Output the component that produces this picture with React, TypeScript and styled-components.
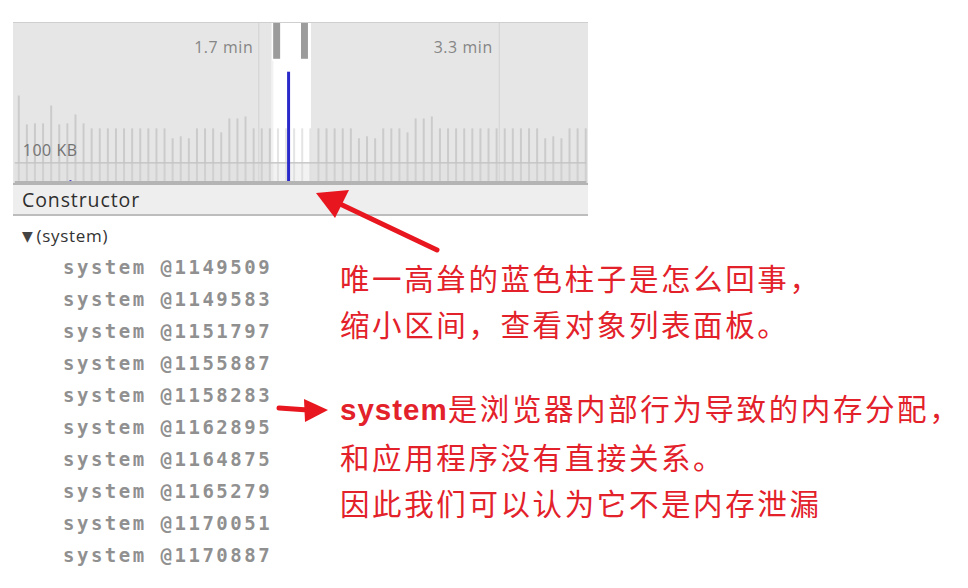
import React from "react";
import styled, { createGlobalStyle } from "styled-components";

const Global = createGlobalStyle`
  html, body { margin: 0; padding: 0; background: #ffffff; }
  body { width: 968px; height: 588px; overflow: hidden; }
`;

const Page = styled.div`
  position: relative;
  width: 968px;
  height: 588px;
  padding: 22px 0 0 13px;
  box-sizing: border-box;
  font-family: "Open Sans", "DejaVu Sans", sans-serif;
`;

const Panel = styled.div`
  width: 575px;
  display: flex;
  flex-direction: column;
`;

const Chart = styled.svg`
  display: block;
  width: 575px;
  height: 161px;
  background: #e6e6e6;
  border-top: 1px solid #cfcfcf;
  box-sizing: border-box;
`;

const Header = styled.div`
  height: 33px;
  display: flex;
  align-items: center;
  padding-left: 9px;
  background: #eeeeee;
  border-top: 2px solid #b4b4b4;
  border-bottom: 2px solid #bdbdbd;
  box-sizing: border-box;
  font-size: 19.5px;
  letter-spacing: 0.9px;
  color: #2e2e2e;
`;

const Lower = styled.div`
  display: flex;
  flex-direction: row;
`;

const List = styled.div`
  width: 327px;
  padding-top: 3px;
  display: flex;
  flex-direction: column;
`;

const GroupRow = styled.div`
  height: 32px;
  display: flex;
  align-items: center;
  padding-left: 9px;
  font-size: 17px;
  letter-spacing: 0.7px;
  color: #333333;
  gap: 3px;
`;

const Tri = styled.span`
  font-size: 14px;
  color: #444;
`;

const Item = styled.div`
  height: 32px;
  display: flex;
  align-items: center;
  padding-left: 50px;
  font-family: "DejaVu Sans Mono", "Liberation Mono", monospace;
  font-size: 19px;
  font-weight: bold;
  letter-spacing: 2.5px;
  color: #909090;
  white-space: nowrap;
`;

const Notes = styled.div`
  padding-top: 38px;
  display: flex;
  flex-direction: column;
  gap: 38px;
`;

const Note = styled.div`
  font-family: "Noto Sans CJK SC", "Noto Sans", sans-serif;
  font-size: 29.5px;
  line-height: 46px;
  letter-spacing: 2.6px;
  color: #e3212a;
  white-space: nowrap;
`;

const Strong = styled.b`
  font-family: "Liberation Sans", "Noto Sans CJK SC", sans-serif;
  font-weight: bold;
  letter-spacing: 1px;
`;

const Overlay = styled.svg`
  position: absolute;
  left: 0;
  top: 0;
  width: 968px;
  height: 588px;
  pointer-events: none;
`;

const ids = [
  "1149509",
  "1149583",
  "1151797",
  "1155887",
  "1158283",
  "1162895",
  "1164875",
  "1165279",
  "1170051",
  "1170887",
];

// top y (page coords) of the grey allocation bars
const firstTops = [95, 124, 123, 123, 105, 124, 123, 114, 123, 128];
const pattern = [128, 128, 136, 128, 128, 118, 128, 128, 128, 138, 128, 128, 116, 128, 132, 128, 128, 128, 138, 128, 128, 118, 128];

function bars() {
  const out: { x: number; top: number }[] = [];
  let i = 0;
  for (let x = 16; x < 588; x += 8.15) {
    const top = i < firstTops.length ? firstTops[i] : pattern[(i * 7) % pattern.length];
    out.push({ x: x - 13, top: top - 22 });
    i++;
  }
  return out;
}

const labelStyle = {
  fontFamily: '"Open Sans", "DejaVu Sans", sans-serif',
  fontSize: 16,
  letterSpacing: 0.6,
};

function TimelineChart() {
  const b = bars();
  return (
    <Chart viewBox="0 0 575 161">
      {/* selection window */}
      <rect x={260} y={0} width={38} height={161} fill="#ffffff" />
      <rect x={258} y={0} width={2} height={161} fill="#f2f2f2" />
      {b.map((bar, i) => {
        const inSel = bar.x > 258 && bar.x < 298;
        return (
          <rect
            key={i}
            x={bar.x}
            y={bar.top}
            width={2}
            height={161 - bar.top}
            fill={inSel ? "#e4e4e4" : "#cbcbcb"}
          />
        );
      })}
      {/* grid lines */}
      <rect x={245} y={0} width={1} height={161} fill="#d2d2d2" />
      <rect x={487} y={0} width={1} height={161} fill="#d2d2d2" />
      <rect x={0} y={140} width={575} height={1.5} fill="#c4c4c4" />
      <rect x={0} y={141.5} width={575} height={19.5} fill="#d9d9d9" opacity={0.35} />
      {/* handles */}
      <rect x={259} y={0} width={10} height={38} fill="#ffffff" />
      <rect x={260} y={0} width={7} height={36} fill="#9c9c9c" />
      <rect x={287} y={0} width={10} height={38} fill="#ffffff" />
      <rect x={288} y={0} width={7} height={36} fill="#9c9c9c" />
      {/* blue bar */}
      <rect x={274} y={49} width={3} height={112} fill="#2a2acb" />
      <rect x={55} y={158} width={2} height={3} fill="#4a4ad0" />
      <text x={240} y={30} textAnchor="end" fill="#858585" style={labelStyle}>
        1.7 min
      </text>
      <text x={481} y={30} textAnchor="end" fill="#858585" style={labelStyle}>
        3.3 min
      </text>
      <text x={8} y={134} fill="#737373" style={labelStyle}>
        100 KB
      </text>
      <rect x={0} y={159} width={575} height={2} fill="#b4b4b4" />
    </Chart>
  );
}

export default function App() {
  return (
    <>
      <Global />
      <Page>
        <Panel>
          <TimelineChart />
          <Header>Constructor</Header>
        </Panel>
        <Lower>
          <List>
            <GroupRow>
              <Tri>▼</Tri>
              <span>(system)</span>
            </GroupRow>
            {ids.map((id) => (
              <Item key={id}>system @{id}</Item>
            ))}
          </List>
          <Notes>
            <Note>
              唯一高耸的蓝色柱子是怎么回事，
              <br />
              缩小区间，查看对象列表面板。
            </Note>
            <Note>
              <Strong>system</Strong>是浏览器内部行为导致的内存分配，
              <br />
              和应用程序没有直接关系。
              <br />
              因此我们可以认为它不是内存泄漏
            </Note>
          </Notes>
        </Lower>
        <Overlay viewBox="0 0 968 588">
          <line x1={437} y1={250} x2={338} y2={203} stroke="#e8161e" strokeWidth={5} strokeLinecap="round" />
          <polygon points="316,193 349,190 335,218" fill="#e8161e" />
          <line x1={279} y1={408} x2={308} y2={410} stroke="#e8161e" strokeWidth={5} strokeLinecap="round" />
          <polygon points="328,410 304,399 305,422" fill="#e8161e" />
        </Overlay>
      </Page>
    </>
  );
}
